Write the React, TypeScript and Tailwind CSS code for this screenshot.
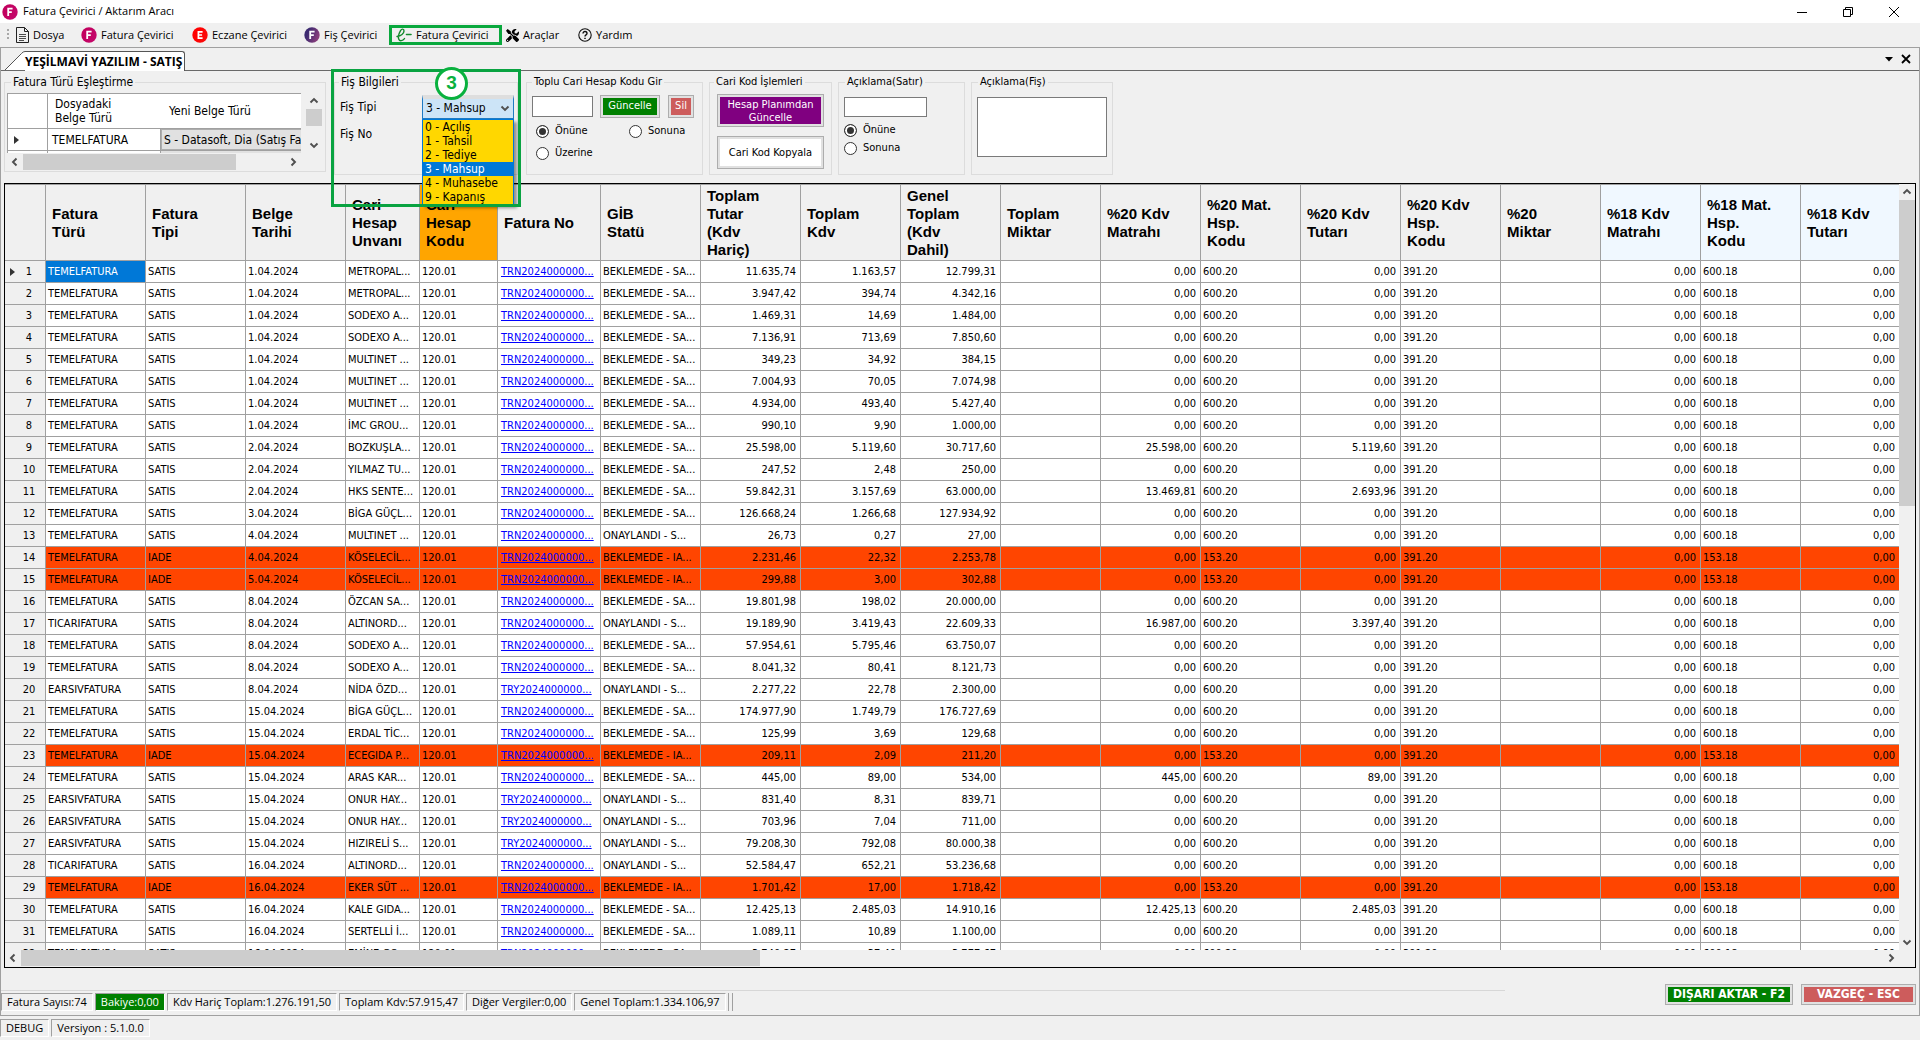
import type { ReactNode } from "react";
import { FaTools } from "react-icons/fa";

const tahoma = "font-['DejaVu_Sans_Condensed','DejaVu_Sans',sans-serif]";
const segoe = "font-['Open_Sans','Noto_Sans',sans-serif]";

type Row = {
  type: string;
  kind: string;
  date: string;
  title: string;
  no: string;
  status: string;
  net: string;
  vat: string;
  total: string;
  base20?: string;
  vat20?: string;
};

const raw: string[] = [
  "T|SATIS|1.04.2024|METROPAL...|N|BS|11.635,74|1.163,57|12.799,31",
  "T|SATIS|1.04.2024|METROPAL...|N|BS|3.947,42|394,74|4.342,16",
  "T|SATIS|1.04.2024|SODEXO A...|N|BS|1.469,31|14,69|1.484,00",
  "T|SATIS|1.04.2024|SODEXO A...|N|BS|7.136,91|713,69|7.850,60",
  "T|SATIS|1.04.2024|MULTINET ...|N|BS|349,23|34,92|384,15",
  "T|SATIS|1.04.2024|MULTINET ...|N|BS|7.004,93|70,05|7.074,98",
  "T|SATIS|1.04.2024|MULTINET ...|N|BS|4.934,00|493,40|5.427,40",
  "T|SATIS|1.04.2024|İMC GROU...|N|BS|990,10|9,90|1.000,00",
  "T|SATIS|2.04.2024|BOZKUŞLA...|N|BS|25.598,00|5.119,60|30.717,60|25.598,00|5.119,60",
  "T|SATIS|2.04.2024|YILMAZ TU...|N|BS|247,52|2,48|250,00",
  "T|SATIS|2.04.2024|HKS SENTE...|N|BS|59.842,31|3.157,69|63.000,00|13.469,81|2.693,96",
  "T|SATIS|3.04.2024|BİGA GÜÇL...|N|BS|126.668,24|1.266,68|127.934,92",
  "T|SATIS|4.04.2024|MULTINET ...|N|O|26,73|0,27|27,00",
  "T|IADE|4.04.2024|KÖSELECİL...|N|BI|2.231,46|22,32|2.253,78",
  "T|IADE|5.04.2024|KÖSELECİL...|N|BI|299,88|3,00|302,88",
  "T|SATIS|8.04.2024|ÖZCAN SA...|N|BS|19.801,98|198,02|20.000,00",
  "C|SATIS|8.04.2024|ALTINORD...|N|O|19.189,90|3.419,43|22.609,33|16.987,00|3.397,40",
  "T|SATIS|8.04.2024|SODEXO A...|N|BS|57.954,61|5.795,46|63.750,07",
  "T|SATIS|8.04.2024|SODEXO A...|N|BS|8.041,32|80,41|8.121,73",
  "E|SATIS|8.04.2024|NİDA ÖZD...|Y|O|2.277,22|22,78|2.300,00",
  "T|SATIS|15.04.2024|BİGA GÜÇL...|N|BS|174.977,90|1.749,79|176.727,69",
  "T|SATIS|15.04.2024|ERDAL TİC...|N|BS|125,99|3,69|129,68",
  "T|IADE|15.04.2024|ECEGIDA P...|N|BI|209,11|2,09|211,20",
  "T|SATIS|15.04.2024|ARAS KAR...|N|BS|445,00|89,00|534,00|445,00|89,00",
  "E|SATIS|15.04.2024|ONUR HAY...|Y|O|831,40|8,31|839,71",
  "E|SATIS|15.04.2024|ONUR HAY...|Y|O|703,96|7,04|711,00",
  "E|SATIS|15.04.2024|HIZIRELİ S...|Y|O|79.208,30|792,08|80.000,38",
  "C|SATIS|16.04.2024|ALTINORD...|N|O|52.584,47|652,21|53.236,68",
  "T|IADE|16.04.2024|EKER SÜT ...|N|BI|1.701,42|17,00|1.718,42",
  "T|SATIS|16.04.2024|KALE GIDA...|N|BS|12.425,13|2.485,03|14.910,16|12.425,13|2.485,03",
  "T|SATIS|16.04.2024|SERTELLİ İ...|N|BS|1.089,11|10,89|1.100,00",
  "T|SATIS|16.04.2024|EMİNE GO...|N|BS|3.740,27|37,40|3.777,67",
];

const types: Record<string, string> = { T: "TEMELFATURA", C: "TICARIFATURA", E: "EARSIVFATURA" };
const statuses: Record<string, string> = {
  BS: "BEKLEMEDE - SA...",
  BI: "BEKLEMEDE - IA...",
  O: "ONAYLANDI - S...",
};

const rows: Row[] = raw.map((line) => {
  const [t, kind, date, title, n, s, net, vat, total, base20, vat20] = line.split("|");
  return { type: types[t], kind, date, title, no: `TR${n}2024000000...`, status: statuses[s], net, vat, total, base20, vat20 };
});

const columns: { label: string; width?: string; bg?: string }[] = [
  { label: "Fatura\nTürü", width: "w-[100px]" },
  { label: "Fatura\nTipi", width: "w-[100px]" },
  { label: "Belge\nTarihi", width: "w-[100px]" },
  { label: "Cari\nHesap\nUnvanı", width: "w-[74px]" },
  { label: "Cari\nHesap\nKodu", width: "w-[78px]", bg: "bg-[#ffa500]" },
  { label: "Fatura No", width: "w-[103px]" },
  { label: "GİB\nStatü", width: "w-[100px]" },
  { label: "Toplam\nTutar\n(Kdv\nHariç)", width: "w-[100px]" },
  { label: "Toplam\nKdv", width: "w-[100px]" },
  { label: "Genel\nToplam\n(Kdv\nDahil)", width: "w-[100px]" },
  { label: "Toplam\nMiktar", width: "w-[100px]" },
  { label: "%20 Kdv\nMatrahı", width: "w-[100px]" },
  { label: "%20 Mat.\nHsp.\nKodu", width: "w-[100px]" },
  { label: "%20 Kdv\nTutarı", width: "w-[100px]" },
  { label: "%20 Kdv\nHsp.\nKodu", width: "w-[100px]" },
  { label: "%20\nMiktar", width: "w-[100px]" },
  { label: "%18 Kdv\nMatrahı", width: "w-[100px]", bg: "bg-[#f0f8ff]" },
  { label: "%18 Mat.\nHsp.\nKodu", width: "w-[100px]", bg: "bg-[#f0f8ff]" },
  { label: "%18 Kdv\nTutarı", bg: "bg-[#f0f8ff]" },
];

function Badge({ letter, from, to }: { letter: string; from: string; to: string }) {
  const id = `badge-${letter}-${from.slice(1)}`;
  return (
    <svg viewBox="0 0 16 16" className="size-4 shrink-0" aria-hidden="true">
      <defs>
        <linearGradient id={id} x1="0" y1="0" x2="1" y2="0.4">
          <stop offset="0.3" stopColor={from} />
          <stop offset="1" stopColor={to} />
        </linearGradient>
      </defs>
      <circle cx="8" cy="8" r="7.7" fill={`url(#${id})`} />
      {letter === "F" ? (
        <path d="M6.2 12V4.6h4.4M6.2 8.2h3.6" fill="none" stroke="#fff" strokeWidth="1.8" />
      ) : (
        <path d="M10.6 4.8H6.4v6.4h4.2M6.4 8h3.7" fill="none" stroke="#fff" strokeWidth="1.7" />
      )}
    </svg>
  );
}

function Chevron({ dir }: { dir: "up" | "down" | "left" | "right" }) {
  const d = {
    up: "M1.5 6.5 5 3l3.5 3.5",
    down: "M1.5 3.5 5 7l3.5-3.5",
    left: "M6.5 1.5 3 5l3.5 3.5",
    right: "M3.5 1.5 7 5 3.5 8.5",
  }[dir];
  return (
    <svg viewBox="0 0 10 10" className="size-2.5" aria-hidden="true">
      <path d={d} fill="none" stroke="#505050" strokeWidth="1.9" />
    </svg>
  );
}

function Arrow({ dir, label }: { dir: "up" | "down" | "left" | "right"; label: string }) {
  return (
    <button type="button" aria-label={label} className="flex size-4 shrink-0 items-center justify-center">
      <Chevron dir={dir} />
    </button>
  );
}

function MenuItem({ icon, label, width }: { icon: ReactNode; label: string; width: string }) {
  return (
    <button type="button" className={`flex shrink-0 items-center gap-1 whitespace-nowrap ${width}`}>
      {icon}
      {label}
    </button>
  );
}

function Group({ title, className, indent = "ml-1", children }: { title: string; className: string; indent?: string; children: ReactNode }) {
  return (
    <fieldset className={`relative shrink-0 border border-[#dcdcdc] ${className}`}>
      <legend className={`px-[2px] leading-[14px] whitespace-nowrap ${indent}`}>{title}</legend>
      {children}
    </fieldset>
  );
}

function Radio({ name, label, checked }: { name: string; label: string; checked?: boolean }) {
  return (
    <label className="flex items-center gap-[6px] leading-[14px]">
      <input
        type="radio"
        name={name}
        defaultChecked={checked}
        className="size-[13px] appearance-none rounded-full border border-[#333] bg-white checked:bg-[#333] checked:shadow-[inset_0_0_0_2px_white]"
      />
      {label}
    </label>
  );
}

function PushButton({ label, face, className }: { label: string; face: string; className: string }) {
  return (
    <button type="button" className={`flex border border-[#adadad] bg-[#e1e1e1] p-[2px] ${className}`}>
      <span className={`flex flex-1 items-center justify-center self-stretch text-center whitespace-pre-line ${face}`}>{label}</span>
    </button>
  );
}

function Caption() {
  return (
    <header className={`flex h-[23px] items-center bg-white pr-5 pl-[2px] ${segoe}`}>
      <Badge letter="F" from="#c2005e" to="#c4086a" />
      <h1 className="ml-[5px] flex-1 text-[11px]">Fatura Çevirici / Aktarım Aracı</h1>
      <div className="flex items-center gap-[34px]">
        <button type="button" aria-label="Küçült">
          <svg viewBox="0 0 12 12" className="size-3"><path d="M1 6.5h10" stroke="#000" /></svg>
        </button>
        <button type="button" aria-label="Önceki boyut">
          <svg viewBox="0 0 12 12" className="size-3" fill="none" stroke="#000">
            <path d="M1.500 3.500h7v7h-7zM3.500 3.500v-2h7v7h-2" />
          </svg>
        </button>
        <button type="button" aria-label="Kapat">
          <svg viewBox="0 0 12 12" className="size-3"><path d="m1 1 10 10M11 1 1 11" stroke="#000" /></svg>
        </button>
      </div>
    </header>
  );
}

function MenuBar() {
  return (
    <nav className={`flex h-6 items-center pl-[6px] text-[11px] ${segoe}`}>
      <svg viewBox="0 0 4 14" className="mr-[6px] h-[14px] w-1 shrink-0" aria-hidden="true">
        <path d="M2 1v12" stroke="#a8a8a8" strokeWidth="2" strokeDasharray="2 2" />
      </svg>
      <MenuItem
        width="w-[65px]"
        label="Dosya"
        icon={
          <svg viewBox="0 0 13 16" className="h-4 w-[13px] shrink-0" fill="none" stroke="#222">
            <path d="M.5.5h8l4 4v11H.5zM8.500.5v4h4" />
            <path d="M3 7.500h7M3 9.500h7M3 11.500h7M3 13.500h5" strokeWidth=".8" />
          </svg>
        }
      />
      <MenuItem width="w-[111px]" label="Fatura Çevirici" icon={<Badge letter="F" from="#c2005e" to="#c4086a" />} />
      <MenuItem width="w-[112px]" label="Eczane Çevirici" icon={<Badge letter="E" from="#ff0000" to="#fa0a0a" />} />
      <MenuItem width="w-[85px]" label="Fiş Çevirici" icon={<Badge letter="F" from="#3c2a70" to="#8a3f7c" />} />
      <MenuItem
        width="mr-1 h-5 w-[113px] border-3 border-[#09a83d] pl-1"
        label="Fatura Çevirici"
        icon={
          <svg viewBox="0 0 16 14" className="h-[14px] w-4 shrink-0" fill="none" stroke="#128a2c" strokeLinecap="round">
            <path d="M1 8.500C5 8 8 5.500 8 3 8 .6 5.800.4 4.400 2.800 2.900 5.500 2 9.200 2.800 11.300c.9 2.300 4 1.500 5.700-.7" strokeWidth="1.400" />
            <path d="M10.500 6.500h4.500" strokeWidth="1.600" />
          </svg>
        }
      />
      <MenuItem width="w-[72px]" label="Araçlar" icon={<FaTools className="size-[13px] shrink-0" />} />
      <MenuItem
        width="w-16"
        label="Yardım"
        icon={
          <svg viewBox="0 0 14 14" className="size-[14px] shrink-0" fill="none" stroke="#111">
            <circle cx="7" cy="7" r="6.200" strokeWidth="1.100" />
            <path d="M5 5.600c0-2.800 4-2.600 4-.2C9 7 7 6.800 7 8.500" strokeWidth="1.400" />
            <path d="M7 9.700v1.400" strokeWidth="1.500" />
          </svg>
        }
      />
    </nav>
  );
}

function TabStrip() {
  return (
    <div className={`flex h-[23px] items-end border-b border-[#696969] pl-1 ${segoe}`}>
      <svg viewBox="0 0 20 19" className="h-[19px] w-5 shrink-0" aria-hidden="true">
        <path d="M0 19 16.500 2.500Q18 .5 20 .5V19z" fill="#fff" />
        <path d="M0 19 16.500 2.500Q18 .5 20 .5" fill="none" stroke="#555" />
      </svg>
      <button type="button" className="-mb-px h-5 rounded-tr-[3px] border-t border-r border-[#555] bg-white pr-[2px] text-[12px] leading-4 font-bold whitespace-nowrap">
        YEŞİLMAVİ YAZILIM - SATIŞ
      </button>
      <div className="ml-auto flex items-center gap-2 self-center pr-2">
        <button type="button" aria-label="Sekmeler">
          <svg viewBox="0 0 8 5" className="h-[5px] w-2"><path d="M0 0h8L4 4.500z" /></svg>
        </button>
        <button type="button" aria-label="Sekmeyi kapat">
          <svg viewBox="0 0 10 10" className="size-2.5"><path d="m1 1 8 8M9 1 1 9" stroke="#000" strokeWidth="1.800" /></svg>
        </button>
      </div>
    </div>
  );
}

function TypeMapping() {
  return (
    <Group title="Fatura Türü Eşleştirme" indent="ml-[6px]" className="h-[97px] w-[322px] text-[12px]">
      <div className="mt-1 ml-[2px] flex pr-[3px]">
        <div className="mr-[5px] h-[60px] flex-1 overflow-hidden">
          <table className="w-full table-fixed border-separate border-spacing-0 border-t border-l border-[#a0a0a0] bg-white leading-[14px]">
            <thead>
              <tr className="h-[35px] text-left">
                <td className="w-10 border-r border-b border-[#a0a0a0]" />
                <th scope="col" className="w-[113px] border-b border-[#a0a0a0] pl-[7px] font-normal">Dosyadaki<br />Belge Türü</th>
                <th scope="col" className="border-b border-[#a0a0a0] pl-2 font-normal">Yeni Belge Türü</th>
              </tr>
            </thead>
            <tbody>
              <tr className="h-[22px]">
                <td className="border-r border-b border-[#a0a0a0] pl-[6px]">
                  <svg viewBox="0 0 5 8" className="h-2 w-[5px]"><path d="M0 0l5 4-5 4z" fill="#333" /></svg>
                </td>
                <td className="border-r border-b border-[#a0a0a0] pl-1">TEMELFATURA</td>
                <td className="border-b border-[#a0a0a0] p-0">
                  <button type="button" className="block h-[21px] w-full overflow-hidden border border-r-0 border-[#adadad] bg-[#e1e1e1] pl-[2px] text-left whitespace-nowrap">
                    S - Datasoft, Dia (Satış Faturası)
                  </button>
                </td>
              </tr>
              <tr className="h-[22px]">
                <td className="border-r border-[#a0a0a0]" />
                <td className="border-r border-[#a0a0a0]" />
                <td className="bg-[#e1e1e1]" />
              </tr>
            </tbody>
          </table>
        </div>
        <div className="flex h-[60px] w-4 flex-col justify-between">
          <Arrow dir="up" label="Yukarı" />
          <div className="mb-auto h-[17px] bg-[#cdcdcd]" />
          <Arrow dir="down" label="Aşağı" />
        </div>
      </div>
      <div className="mt-px mr-6 ml-[2px] flex h-4">
        <Arrow dir="left" label="Sola" />
        <div className="mr-auto w-[213px] bg-[#cdcdcd]" />
        <Arrow dir="right" label="Sağa" />
      </div>
    </Group>
  );
}

const slipTypes = ["0 - Açılış", "1 - Tahsil", "2 - Tediye", "3 - Mahsup", "4 - Muhasebe", "9 - Kapanış"];

function SlipInfo() {
  return (
    <Group title="Fiş Bilgileri" className="mx-[2px] h-[100px] w-[184px] text-[12px]">
      <div className="mt-[6px] flex items-center pr-[3px] pl-[5px]">
        <label htmlFor="slip-type" className="flex-1 leading-[14px]">Fiş Tipi</label>
        <div className="relative w-[92px]">
          <select
            id="slip-type"
            defaultValue="3 - Mahsup"
            className="block h-6 w-full appearance-none border border-t-4 border-[#1f7bc4] border-t-[#dedede] bg-[#cce4f7] pb-[2px] pl-[3px] leading-4"
          >
            {slipTypes.map((s) => <option key={s}>{s}</option>)}
          </select>
          <span className="pointer-events-none absolute top-2 right-1"><Chevron dir="down" /></span>
          <ul role="listbox" aria-label="Fiş Tipi" className="absolute top-6 left-0 z-20 w-full border border-[#0078d7] bg-[#ffd700] shadow-[3px_3px_3px_rgba(0,0,0,0.4)]">
            {slipTypes.map((s) => (
              <li
                key={s}
                role="option"
                aria-selected={s === "3 - Mahsup"}
                className="h-[14px] pl-[2px] leading-[14px] aria-selected:bg-[#0078d7] aria-selected:text-white"
              >
                {s}
              </li>
            ))}
          </ul>
        </div>
      </div>
      <p className="mt-2 pl-[5px] leading-[14px]">Fiş No</p>
      <div className="pointer-events-none absolute -top-[20px] -left-1 z-30 h-[138px] w-[190px] border-3 border-[#09a341]" />
      <div className="pointer-events-none absolute -top-[22px] left-[100px] z-30 flex size-[33px] items-center justify-center rounded-full border-3 border-[#09b13e] bg-white font-['Liberation_Sans',sans-serif] text-[19px] font-bold text-[#09b13e]">
        3
      </div>
    </Group>
  );
}

function Toolbox() {
  return (
    <section className={`flex items-start gap-[6px] pt-1 pb-2 pl-[3px] text-[11px] ${tahoma}`}>
      <TypeMapping />
      <SlipInfo />
      <Group title="Toplu Cari Hesap Kodu Gir" indent="ml-[5px]" className="h-[100px] w-[177px]">
        <div className="mt-[6px] flex items-center pl-[5px]">
          <input aria-label="Toplu cari hesap kodu" className="h-[21px] w-[61px] border border-[#7a7a7a] bg-white px-1" />
          <PushButton label="Güncelle" face="bg-[#008000] text-white" className="ml-[7px] h-[23px] w-[60px]" />
          <PushButton label="Sil" face="bg-[#cd5c5c] text-white" className="ml-2 h-[23px] w-[26px]" />
        </div>
        <div className="mt-[6px] grid grid-cols-[93px_1fr] gap-y-2 pl-[9px]">
          <Radio name="bulk" label="Önüne" checked />
          <Radio name="bulk" label="Sonuna" />
          <Radio name="bulk" label="Üzerine" />
        </div>
      </Group>
      <Group title="Cari Kod İşlemleri" className="h-[100px] w-[123px]">
        <div className="mt-[5px] flex flex-col gap-[9px] px-[7px] leading-[13px]">
          <PushButton label={"Hesap Planımdan\nGüncelle"} face="bg-[#800080] text-white" className="h-[33px]" />
          <PushButton label="Cari Kod Kopyala" face="bg-white text-black" className="h-[33px]" />
        </div>
      </Group>
      <Group title="Açıklama(Satır)" indent="ml-[6px]" className="h-[100px] w-[127px]">
        <input aria-label="Açıklama (Satır)" className="mt-2 ml-[5px] block h-5 w-[83px] border border-[#7a7a7a] bg-white px-1" />
        <div className="mt-[6px] flex flex-col gap-1 pl-[5px]">
          <Radio name="line" label="Önüne" checked />
          <Radio name="line" label="Sonuna" />
        </div>
      </Group>
      <Group title="Açıklama(Fiş)" indent="ml-[6px]" className="h-[100px] w-[142px]">
        <textarea aria-label="Açıklama (Fiş)" className="mt-2 ml-[5px] block h-[60px] w-[130px] resize-none border border-[#7a7a7a] bg-white p-1" />
      </Group>
    </section>
  );
}

function InvoiceRow({ row, index }: { row: Row; index: number }) {
  const back = row.kind === "IADE";
  const acc = back ? "153" : "600";
  const cells: { v: ReactNode; right?: boolean }[] = [
    { v: row.kind },
    { v: row.date },
    { v: row.title },
    { v: "120.01" },
    { v: <a href="#fatura" className="pl-px text-[#0000ff] underline">{row.no}</a> },
    { v: row.status },
    { v: row.net, right: true },
    { v: row.vat, right: true },
    { v: row.total, right: true },
    { v: "" },
    { v: row.base20 ?? "0,00", right: true },
    { v: `${acc}.20` },
    { v: row.vat20 ?? "0,00", right: true },
    { v: "391.20" },
    { v: "" },
    { v: "0,00", right: true },
    { v: `${acc}.18` },
    { v: "0,00", right: true },
  ];
  return (
    <tr className={`h-[22px] ${back ? "bg-[#ff4500]" : "bg-white"}`}>
      <th scope="row" className="border-r border-b border-[#a0a0a0] bg-[#f0f0f0] p-0 font-normal">
        <div className="grid grid-cols-[7px_1fr_4px] items-center pl-[5px]">
          {index === 0 ? (
            <svg viewBox="0 0 5 8" className="h-2 w-[5px]"><path d="M0 0l5 4-5 4z" fill="#333" /></svg>
          ) : <span />}
          <span>{index + 1}</span>
        </div>
      </th>
      <td className={`border-r border-b border-[#a0a0a0] px-[2px] ${index === 0 ? "bg-[#0078d7] text-white" : ""}`}>{row.type}</td>
      {cells.map((c, i) => (
        <td key={i} className={`overflow-hidden border-r border-b border-[#a0a0a0] pr-1 pl-[2px] last:border-r-0 ${c.right ? "text-right" : ""}`}>
          {c.v}
        </td>
      ))}
    </tr>
  );
}

function InvoiceGrid() {
  return (
    <section className="mx-[3px] flex min-h-0 flex-1 flex-col border border-black">
      <div className="flex min-h-0 flex-1">
        <div className={`min-w-0 flex-1 overflow-hidden ${tahoma}`}>
          <table className="w-full table-fixed border-separate border-spacing-0 text-[11px] leading-[14px] whitespace-nowrap">
            <thead className="font-['Liberation_Sans',sans-serif] text-[15px] leading-[18px]">
              <tr className="h-[77px] text-left">
                <td className="w-[41px] border-t border-r border-b border-[#a0a0a0] p-0" />
                {columns.map((c) => (
                  <th key={c.label} scope="col" className={`border-t border-r border-b border-[#a0a0a0] p-0 pl-[6px] whitespace-pre-line last:border-r-0 ${c.width ?? ""} ${c.bg ?? ""}`}>
                    {c.label}
                  </th>
                ))}
              </tr>
            </thead>
            <tbody>
              {rows.map((r, i) => <InvoiceRow key={i} row={r} index={i} />)}
            </tbody>
          </table>
        </div>
        <div className="flex w-4 flex-col">
          <Arrow dir="up" label="Yukarı" />
          <div className="mb-auto h-2/5 bg-[#cdcdcd]" />
          <Arrow dir="down" label="Aşağı" />
        </div>
      </div>
      <div className="flex h-[17px] pr-4 pb-px">
        <Arrow dir="left" label="Sola" />
        <div className="mr-auto w-[39%] bg-[#cdcdcd]" />
        <Arrow dir="right" label="Sağa" />
      </div>
    </section>
  );
}

function StatusCell({ children, tone = "" }: { children: ReactNode; tone?: string }) {
  return (
    <span className={`border border-t-[#a0a0a0] border-r-white border-b-white border-l-[#a0a0a0] px-[5px] leading-4 whitespace-nowrap ${tone}`}>
      {children}
    </span>
  );
}

function Footer() {
  return (
    <footer className="flex h-[47px] items-start pr-[3px]">
      <div className={`mt-[22px] flex flex-1 gap-[2px] border-t border-[#d7d7d7] pt-[2px] text-[11px] ${segoe}`}>
        <StatusCell>Fatura Sayısı:74</StatusCell>
        <StatusCell tone="bg-[#008000] text-white">Bakiye:0,00</StatusCell>
        <StatusCell>Kdv Hariç Toplam:1.276.191,50</StatusCell>
        <StatusCell>Toplam Kdv:57.915,47</StatusCell>
        <StatusCell>Diğer Vergiler:0,00</StatusCell>
        <StatusCell>Genel Toplam:1.334.106,97</StatusCell>
        <span className="w-[5px] border-x border-[#a0a0a0]" />
      </div>
      <div className={`mt-4 ml-40 flex gap-2 text-[12px] leading-[15px] font-bold text-white ${tahoma}`}>
        <PushButton label="DIŞARI AKTAR - F2" face="bg-[#008000]" className="h-[21px] w-[128px]" />
        <PushButton label="VAZGEÇ - ESC" face="bg-[#cd5c5c]" className="h-[21px] w-[115px]" />
      </div>
    </footer>
  );
}

export default function App() {
  return (
    <div className="flex h-screen w-full flex-col overflow-hidden bg-[#f0f0f0] text-black">
      <Caption />
      <MenuBar />
      <main className="flex min-h-0 flex-1 flex-col border border-[#a0a0a0]">
        <TabStrip />
        <Toolbox />
        <InvoiceGrid />
        <Footer />
      </main>
      <div className={`flex h-6 items-start gap-[2px] pt-[3px] text-[11px] ${segoe}`}>
        <StatusCell>DEBUG</StatusCell>
        <StatusCell>Versiyon : 5.1.0.0</StatusCell>
      </div>
    </div>
  );
}
